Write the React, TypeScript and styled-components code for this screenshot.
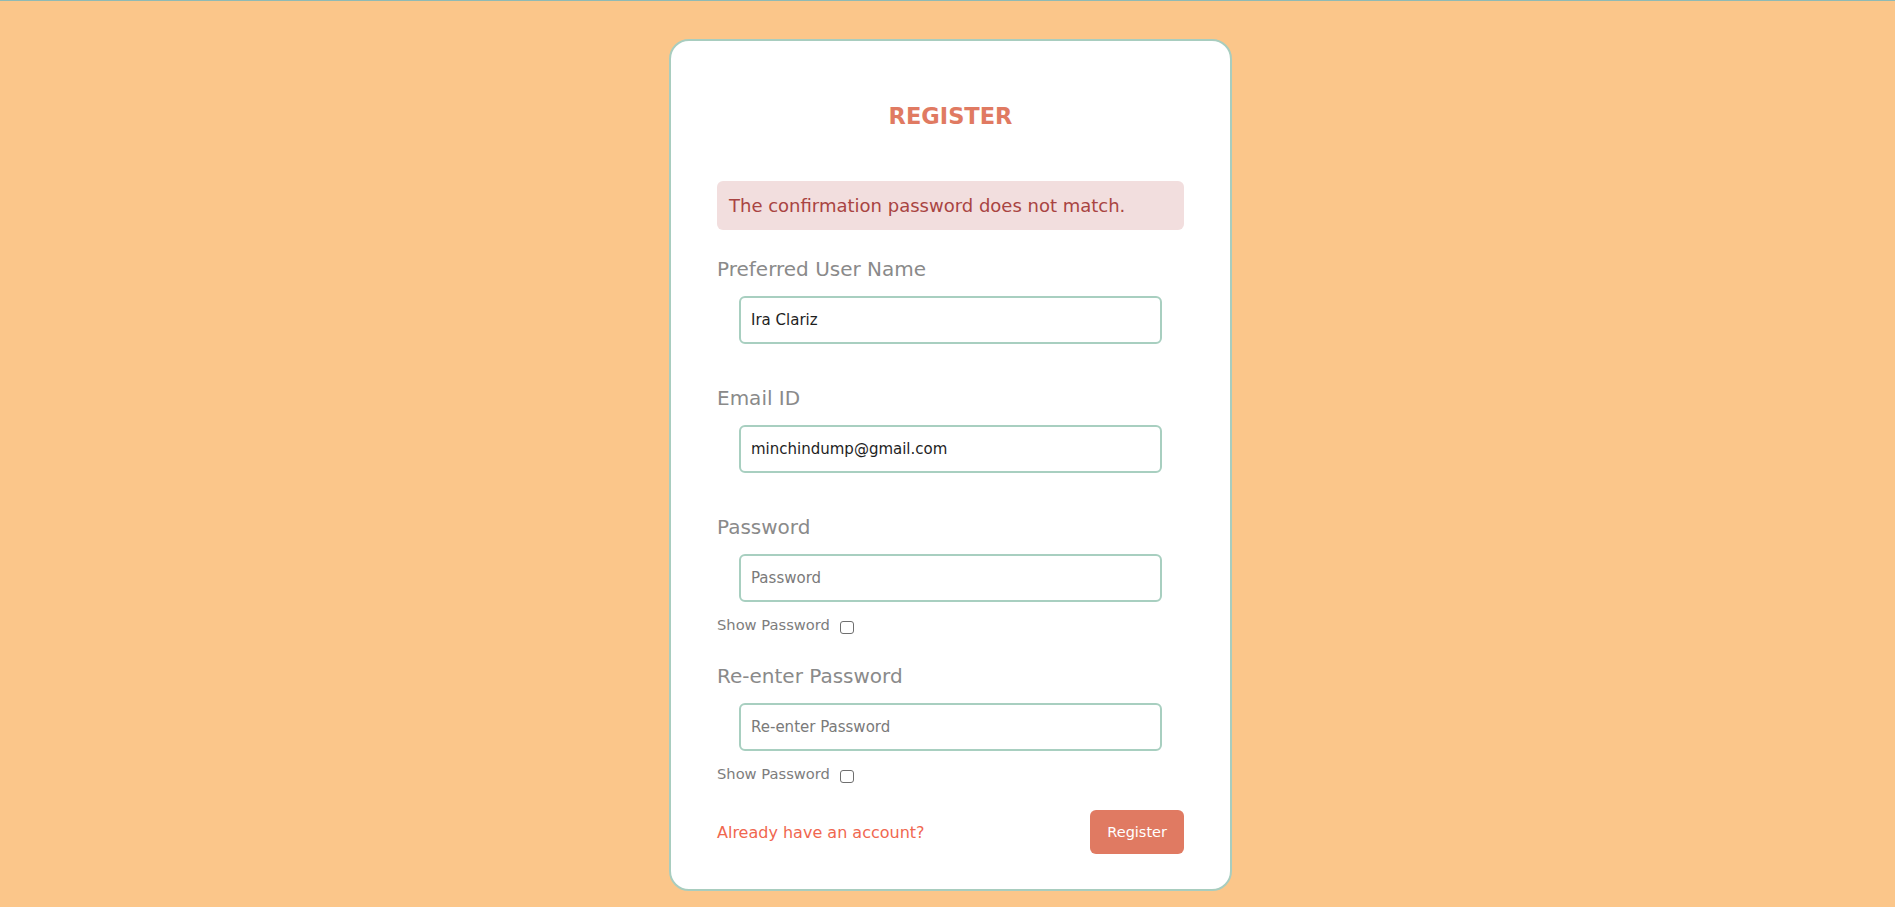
import styled, { createGlobalStyle } from "styled-components";

const GlobalStyle = createGlobalStyle`
* {
  box-sizing: border-box;
}

html, body {
  margin: 0;
  padding: 0;
  background-color: #fbc68a;
  font-family: "DejaVu Sans", "Liberation Sans", sans-serif;
}
`

function App() {
  return (
    <>
      <GlobalStyle />
      <TopLine />
      <Page>
        <Card>
          <Title>REGISTER</Title>

          <Alert>The confirmation password does not match.</Alert>

          <Field $gap={39}>
            <Label>Preferred User Name</Label>
            <Input type="text" defaultValue="Ira Clariz" />
          </Field>

          <Field $gap={39}>
            <Label>Email ID</Label>
            <Input type="email" defaultValue="minchindump@gmail.com" />
          </Field>

          <Field $gap={26}>
            <Label>Password</Label>
            <Input type="password" placeholder="Password" />
            <ShowRow>
              Show Password
              <CheckBox type="checkbox" />
            </ShowRow>
          </Field>

          <Field $gap={26}>
            <Label>Re-enter Password</Label>
            <Input type="password" placeholder="Re-enter Password" />
            <ShowRow>
              Show Password
              <CheckBox type="checkbox" />
            </ShowRow>
          </Field>

          <Footer>
            <LoginLink href="#">Already have an account?</LoginLink>
            <SubmitButton type="button">Register</SubmitButton>
          </Footer>
        </Card>
      </Page>
    </>
  );
}

/* 상단 라인 */
const TopLine = styled.div`
height: 1px;
background-color: #8fbab4;
`

const Page = styled.main`
display: flex;
justify-content: center;
padding: 38px 0 8px 6px;
`

/* 카드 */
const Card = styled.section`
display: flex;
flex-direction: column;
width: 563px;
background-color: #ffffff;
border: 2px solid #a8cdbf;
border-radius: 20px;
padding: 59px 46px 35px;
`

const Title = styled.h1`
margin: 0 0 48px;
text-align: center;
font-size: 22.5px;
line-height: 33px;
font-weight: 700;
color: #e07a62;
`

/* 에러 메시지 */
const Alert = styled.div`
margin-bottom: 24px;
padding: 11px 12px;
background-color: #f2dede;
color: #a94442;
border-radius: 6px;
font-size: 18px;
line-height: 27px;
`

const Field = styled.div<{ $gap: number }>`
display: flex;
flex-direction: column;
margin-bottom: ${(p) => p.$gap}px;
`

const Label = styled.label`
font-size: 20px;
line-height: 30px;
color: #8a8a8a;
margin-bottom: 12px;
`

const Input = styled.input`
height: 48px;
margin: 0 22px;
padding: 0 10px;
border: 2px solid #a8cfc0;
border-radius: 6px;
font-family: inherit;
font-size: 15px;
color: #1e1e1e;
outline: none;

&::placeholder {
  color: #7a7a7a;
}
`

/* 비밀번호 보기 */
const ShowRow = styled.label`
display: flex;
align-items: center;
margin-top: 12px;
height: 21px;
font-size: 14.7px;
line-height: 21px;
color: #7d7d7d;
`

const CheckBox = styled.input`
appearance: none;
width: 14px;
height: 13px;
margin: 5px 0 0 10px;
border: 1px solid #6f6f6f;
border-radius: 3px;
background-color: #ffffff;
`

const Footer = styled.div`
display: flex;
justify-content: space-between;
align-items: center;
`

const LoginLink = styled.a`
font-size: 16px;
color: #f0674f;
text-decoration: none;
`

const SubmitButton = styled.button`
height: 44px;
padding: 0 17px;
background-color: #e07a62;
color: #ffffff;
border: none;
border-radius: 6px;
font-family: inherit;
font-size: 14.5px;
cursor: pointer;
`

export default App;
